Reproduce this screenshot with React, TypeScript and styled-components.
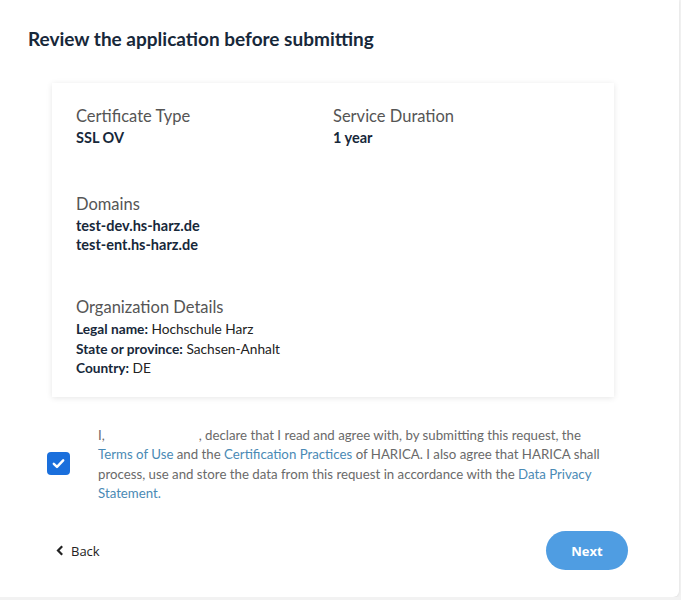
import React from "react";
import styled, { createGlobalStyle } from "styled-components";

const Global = createGlobalStyle`
  html, body { margin: 0; padding: 0; background: #f2f2f2; }
  body { font-family: Lato, "Open Sans", sans-serif; }
  * { box-sizing: border-box; }
`;

const Page = styled.div`
  width: 679px;
  height: 597px;
  background: #ffffff;
  border-radius: 0 0 6px 0;
  box-shadow: 0 1px 3px rgba(0, 0, 0, 0.08);
  padding: 28px 0 0 28px;
  display: flex;
  flex-direction: column;
`;

const Title = styled.h1`
  margin: 0;
  font-family: Lato, sans-serif;
  font-weight: 700;
  font-size: 19px;
  line-height: 22px;
  color: #17283a;
`;

const Card = styled.section`
  margin: 33px 0 0 24px;
  width: 562px;
  background: #fff;
  box-shadow: 0 1px 6px rgba(0, 0, 0, 0.1);
  padding: 21px 24px 19.5px;
  display: flex;
  flex-direction: column;
`;

const Row = styled.div`
  display: grid;
  grid-template-columns: 257px 1fr;
`;

const Field = styled.div<{ $gap?: number }>`
  display: flex;
  flex-direction: column;
  margin-top: ${(p) => p.$gap ?? 0}px;
`;

const Label = styled.div`
  font-size: 16.5px;
  line-height: 24px;
  color: #555555;
`;

const Value = styled.div`
  font-size: 14.5px;
  line-height: 19px;
  font-weight: 700;
  color: #17283a;
`;

const Detail = styled.div`
  font-size: 13.7px;
  line-height: 19.5px;
  color: #222;
  b { color: #17283a; font-weight: 700; }
`;

const Consent = styled.div`
  display: flex;
  align-items: center;
  gap: 28px;
  margin: 29px 0 0 19px;
`;

const CheckBox = styled.div`
  width: 23px;
  height: 23px;
  border-radius: 4px;
  background: #1a6fdc;
  display: flex;
  align-items: center;
  justify-content: center;
  flex: none;
  margin-top: -3px;
`;

const ConsentText = styled.p`
  margin: 0;
  width: 506px;
  font-size: 13.25px;
  line-height: 19.3px;
  color: #6a6a6a;
`;

const Blank = styled.span`
  display: inline-block;
  width: 94px;
`;

const Link = styled.a`
  color: #4a8ab5;
  text-decoration: none;
`;

const Footer = styled.div`
  display: flex;
  align-items: center;
  justify-content: space-between;
  margin: 28px 0 0 0;
  padding: 0 51px 0 28px;
`;

const BackButton = styled.button`
  border: none;
  background: none;
  padding: 0;
  display: flex;
  align-items: center;
  gap: 7px;
  font-family: "Open Sans", sans-serif;
  font-size: 13px;
  color: #222;
  cursor: pointer;
`;

const NextButton = styled.button`
  width: 82px;
  height: 39px;
  border: none;
  border-radius: 20px;
  background: #4f9de2;
  color: #fff;
  font-family: "Open Sans", sans-serif;
  font-weight: 700;
  font-size: 13px;
  cursor: pointer;
`;

export default function App() {
  return (
    <>
      <Global />
      <Page>
        <Title>Review the application before submitting</Title>
        <Card>
          <Row>
            <Field>
              <Label>Certificate Type</Label>
              <Value>SSL OV</Value>
            </Field>
            <Field>
              <Label>Service Duration</Label>
              <Value>1 year</Value>
            </Field>
          </Row>
          <Field $gap={45}>
            <Label>Domains</Label>
            <Value>test-dev.hs-harz.de</Value>
            <Value>test-ent.hs-harz.de</Value>
          </Field>
          <Field $gap={41}>
            <Label>Organization Details</Label>
            <Detail>
              <b>Legal name:</b> Hochschule Harz
            </Detail>
            <Detail>
              <b>State or province:</b> Sachsen-Anhalt
            </Detail>
            <Detail>
              <b>Country:</b> DE
            </Detail>
          </Field>
        </Card>
        <Consent>
          <CheckBox>
            <svg width="15" height="15" viewBox="0 0 16 16">
              <path d="M3 8.3 L6.4 11.6 L13 4.6" fill="none" stroke="#fff" strokeWidth="2.6" strokeLinecap="round" strokeLinejoin="round" />
            </svg>
          </CheckBox>
          <ConsentText>
            I,<Blank />, declare that I read and agree with, by submitting this request, the{" "}
            <Link>Terms of Use</Link> and the <Link>Certification Practices</Link> of HARICA. I also agree that HARICA shall
            process, use and store the data from this request in accordance with the{" "}
            <Link>Data Privacy Statement.</Link>
          </ConsentText>
        </Consent>
        <Footer>
          <BackButton>
            <svg width="8" height="11" viewBox="0 0 8 11">
              <path d="M6.2 1.2 L2 5.5 L6.2 9.8" fill="none" stroke="#222" strokeWidth="2.2" />
            </svg>
            Back
          </BackButton>
          <NextButton>Next</NextButton>
        </Footer>
      </Page>
    </>
  );
}
